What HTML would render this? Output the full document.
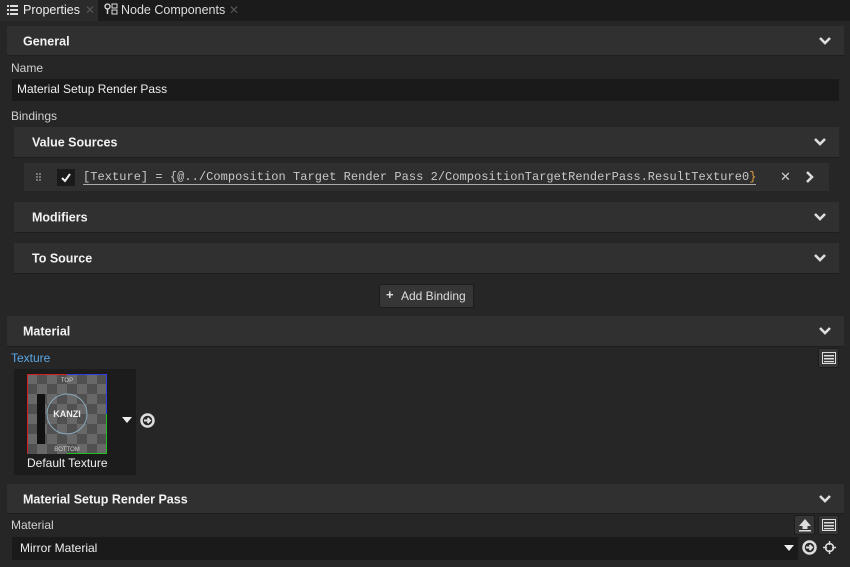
<!DOCTYPE html>
<html><head><meta charset="utf-8"><style>
*{margin:0;padding:0;box-sizing:border-box}
body{width:850px;height:567px;background:#262626;font-family:"Liberation Sans",sans-serif;font-size:12px;color:#e6e6e6;position:relative;overflow:hidden}
.a{position:absolute}
.hdr{position:absolute;background:#303030;border-bottom:1px solid #1e1e1e;font-weight:bold;font-size:12.5px;color:#f2f2f2}
.hdr span{position:absolute;top:50%;transform:translateY(-45%)}
.chev{position:absolute;top:50%;margin-top:-5px;width:14px;height:10px}
.lbl{position:absolute;color:#d0d0d0;font-size:12px}
.inp{position:absolute;background:#1a1a1a}
.btn{position:absolute;background:#363636;border:1px solid #1c1c1c;border-radius:2px}
</style></head><body>
<div class="a" style="left:0;top:0;width:850px;height:21px;background:#1b1b1b"></div>
<div class="a" style="left:0;top:0;width:98px;height:21px;background:#2b2b2b"></div>
<svg class="a" style="left:7px;top:5px" width="11" height="10"><g fill="#ddd"><rect x="0" y="0" width="2" height="2"/><rect x="3" y="0" width="8" height="2"/><rect x="0" y="4" width="2" height="2"/><rect x="3" y="4" width="8" height="2"/><rect x="0" y="8" width="2" height="2"/><rect x="3" y="8" width="8" height="2"/></g></svg>
<div class="a" style="left:23px;top:3px;font-size:12.5px;color:#eee">Properties</div>
<div class="a" style="left:85px;top:3px;font-size:12px;color:#555">✕</div>
<svg class="a" style="left:104px;top:3px" width="14" height="12"><circle cx="3.5" cy="3.5" r="2.5" fill="none" stroke="#ddd" stroke-width="1.3"/><rect x="2.8" y="6" width="1.4" height="5" fill="#ddd"/><rect x="8" y="1" width="5" height="4" fill="none" stroke="#ddd"/><rect x="8" y="7" width="5" height="4" fill="none" stroke="#ddd"/></svg>
<div class="a" style="left:121px;top:3px;font-size:12.5px;color:#ddd">Node Components</div>
<div class="a" style="left:229px;top:3px;font-size:12px;color:#555">✕</div>

<div class="hdr" style="left:7px;top:26px;width:837px;height:30px"><span style="left:16px">General</span><svg class="chev" style="right:12px" viewBox="0 0 14 10"><path d="M2 2 L7 7 L12 2" stroke="#ddd" stroke-width="2.6" fill="none"/></svg></div>
<div class="lbl" style="left:11px;top:61px">Name</div>
<div class="inp" style="left:12px;top:79px;width:827px;height:22px"></div>
<div class="a" style="left:17px;top:82px;color:#eee">Material Setup Render Pass</div>
<div class="lbl" style="left:11px;top:109px">Bindings</div>

<div class="hdr" style="left:14px;top:127px;width:825px;height:31px"><span style="left:18px">Value Sources</span><svg class="chev" style="right:12px" viewBox="0 0 14 10"><path d="M2 2 L7 7 L12 2" stroke="#ddd" stroke-width="2.6" fill="none"/></svg></div>
<div class="a" style="left:24px;top:163px;width:805px;height:28px;background:#2f2f2f"></div>
<svg class="a" style="left:36px;top:173px" width="6" height="9"><g fill="#777"><rect x="0" y="0" width="2" height="2"/><rect x="3" y="0" width="2" height="2"/><rect x="0" y="3" width="2" height="2"/><rect x="3" y="3" width="2" height="2"/><rect x="0" y="6" width="2" height="2"/><rect x="3" y="6" width="2" height="2"/></g></svg>
<div class="a" style="left:57px;top:169px;width:18px;height:17px;background:#1a1a1a"></div>
<svg class="a" style="left:59px;top:171px" width="14" height="13"><path d="M3 7 L6 10 L11 3" stroke="#eee" stroke-width="2" fill="none"/></svg>
<div class="a" style="left:83px;top:170px;font-family:'Liberation Mono',monospace;font-size:12px;color:#c8c8c8;border-bottom:1px solid #aaa;line-height:14px;white-space:nowrap;letter-spacing:0.04px">[Texture] = {@../Composition Target Render Pass 2/CompositionTargetRenderPass.ResultTexture0<span style="color:#e0a040">}</span></div>
<div class="a" style="left:780px;top:169px;color:#ccc;font-size:13px">✕</div>
<svg class="a" style="left:805px;top:170px" width="10" height="14"><path d="M2 2 L7 7 L2 12" stroke="#ddd" stroke-width="2.5" fill="none"/></svg>

<div class="hdr" style="left:14px;top:202px;width:825px;height:31px"><span style="left:18px">Modifiers</span><svg class="chev" style="right:12px" viewBox="0 0 14 10"><path d="M2 2 L7 7 L12 2" stroke="#ddd" stroke-width="2.6" fill="none"/></svg></div>
<div class="hdr" style="left:14px;top:243px;width:825px;height:31px"><span style="left:18px">To Source</span><svg class="chev" style="right:12px" viewBox="0 0 14 10"><path d="M2 2 L7 7 L12 2" stroke="#ddd" stroke-width="2.6" fill="none"/></svg></div>

<div class="btn" style="left:379px;top:284px;width:95px;height:24px"></div>
<div class="a" style="left:386px;top:287px;color:#ddd;font-size:13px;font-weight:bold">+</div>
<div class="a" style="left:401px;top:289px;color:#ddd">Add Binding</div>

<div class="hdr" style="left:7px;top:316px;width:837px;height:31px"><span style="left:16px">Material</span><svg class="chev" style="right:12px" viewBox="0 0 14 10"><path d="M2 2 L7 7 L12 2" stroke="#ddd" stroke-width="2.6" fill="none"/></svg></div>
<div class="a" style="left:11px;top:351px;color:#5aa8e6">Texture</div>
<div class="btn" style="left:818px;top:348px;width:21px;height:20px"></div>
<svg class="a" style="left:822px;top:352px" width="14" height="12"><rect x="0.5" y="0.5" width="13" height="11" fill="none" stroke="#ddd"/><rect x="2" y="3" width="10" height="1.5" fill="#ddd"/><rect x="2" y="6" width="10" height="1.5" fill="#ddd"/><rect x="2" y="9" width="10" height="1.2" fill="#ddd"/></svg>
<div class="a" style="left:14px;top:369px;width:122px;height:106px;background:#1c1c1c"></div>
<svg class="a" style="left:27px;top:374px" width="80" height="80">
<defs><pattern id="c" width="20" height="20" patternUnits="userSpaceOnUse"><rect width="20" height="20" fill="#505050"/><rect width="10" height="10" fill="#686868"/><rect x="10" y="10" width="10" height="10" fill="#686868"/></pattern></defs>
<rect width="80" height="80" fill="url(#c)"/>
<rect x="10" y="20" width="8" height="50" fill="#111"/>
<circle cx="40" cy="40" r="20" fill="none" stroke="#8ab" stroke-width="1"/>
<text x="40" y="43" font-family="Liberation Sans" font-weight="bold" font-size="9" fill="#eee" text-anchor="middle">KANZI</text>
<text x="40" y="8" font-family="Liberation Sans" font-size="6" fill="#ccc" text-anchor="middle">TOP</text>
<text x="40" y="77" font-family="Liberation Sans" font-size="6" fill="#ccc" text-anchor="middle">BOTTOM</text>
<path d="M0.5 79.5 V0.5 H40" stroke="#d02020" fill="none"/><path d="M40 0.5 H79.5 V40" stroke="#3040e0" fill="none"/><path d="M79.5 40 V79.5 H40" stroke="#20c020" fill="none"/>
</svg>
<div class="a" style="left:27px;top:456px;color:#f0f0f0">Default Texture</div>
<svg class="a" style="left:122px;top:417px" width="10" height="7"><path d="M0 0 H10 L5 6Z" fill="#eee"/></svg>
<svg class="a" style="left:140px;top:413px" width="15" height="15"><circle cx="7.5" cy="7.5" r="6" fill="none" stroke="#ddd" stroke-width="2.5"/><path d="M4 7.5 H10 M7.5 5 L10 7.5 L7.5 10" stroke="#ddd" stroke-width="2" fill="none"/></svg>

<div class="hdr" style="left:7px;top:484px;width:837px;height:30px"><span style="left:16px">Material Setup Render Pass</span><svg class="chev" style="right:12px" viewBox="0 0 14 10"><path d="M2 2 L7 7 L12 2" stroke="#ddd" stroke-width="2.6" fill="none"/></svg></div>
<div class="lbl" style="left:11px;top:518px">Material</div>
<div class="btn" style="left:794px;top:515px;width:21px;height:20px"></div>
<svg class="a" style="left:798px;top:518px" width="14" height="14"><path d="M7 1 L13 8 H9.5 V11 H4.5 V8 H1Z" fill="#ddd"/><rect x="1" y="12" width="12" height="1.5" fill="#ddd"/></svg>
<div class="btn" style="left:818px;top:515px;width:21px;height:20px"></div>
<svg class="a" style="left:822px;top:519px" width="14" height="12"><rect x="0.5" y="0.5" width="13" height="11" fill="none" stroke="#ddd"/><rect x="2" y="3" width="10" height="1.5" fill="#ddd"/><rect x="2" y="6" width="10" height="1.5" fill="#ddd"/><rect x="2" y="9" width="10" height="1.2" fill="#ddd"/></svg>
<div class="inp" style="left:12px;top:537px;width:786px;height:23px"></div>
<div class="a" style="left:20px;top:541px;color:#eee">Mirror Material</div>
<svg class="a" style="left:784px;top:545px" width="10" height="7"><path d="M0 0 H10 L5 6Z" fill="#eee"/></svg>
<svg class="a" style="left:802px;top:540px" width="15" height="15"><circle cx="7.5" cy="7.5" r="6" fill="none" stroke="#ddd" stroke-width="2.5"/><path d="M4 7.5 H10 M7.5 5 L10 7.5 L7.5 10" stroke="#ddd" stroke-width="2" fill="none"/></svg>
<svg class="a" style="left:823px;top:541px" width="13" height="13"><circle cx="6.5" cy="6.5" r="4" fill="none" stroke="#ddd" stroke-width="1.5"/><path d="M6.5 0 V4 M6.5 9 V13 M0 6.5 H4 M9 6.5 H13" stroke="#ddd" stroke-width="1.5"/></svg>
</body></html>
